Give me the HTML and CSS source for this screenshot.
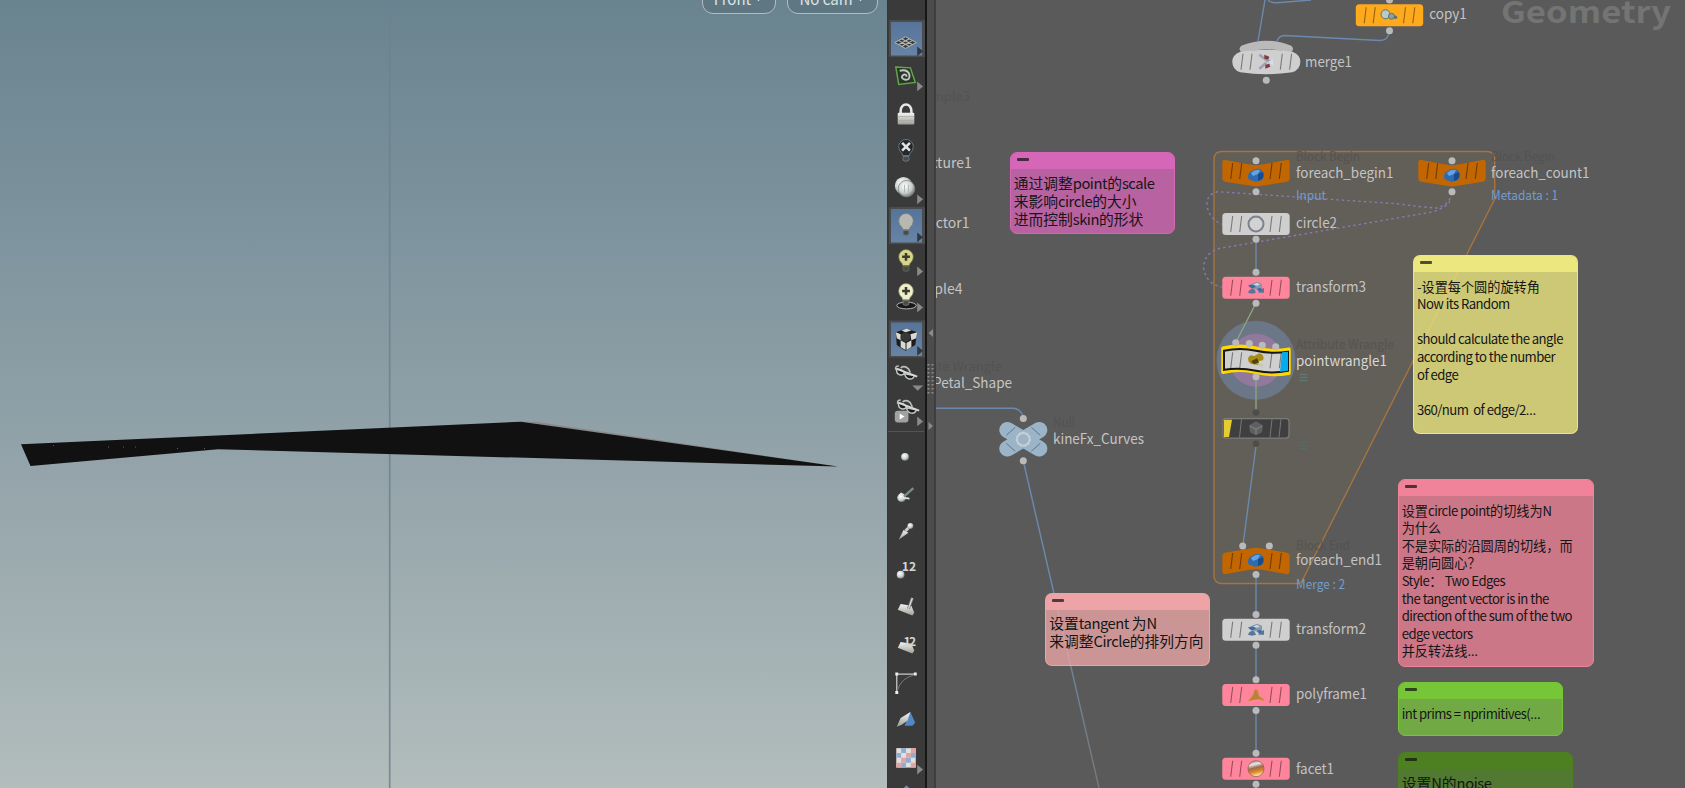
FILE: index.html
```html
<!DOCTYPE html>
<html lang="zh-CN">
<head>
<meta charset="utf-8">
<title>Geometry</title>
<link rel="stylesheet" href="styles.css">
</head>
<body>
<svg class="defs" width="0" height="0" aria-hidden="true">
  <defs>
    <linearGradient id="metal" x1="0" y1="0" x2="0" y2="1"><stop offset="0" stop-color="#f4f4f0"/><stop offset="1" stop-color="#9d9d99"/></linearGradient>
    <radialGradient id="ball" cx=".4" cy=".35" r=".7"><stop offset="0" stop-color="#ffffff"/><stop offset=".6" stop-color="#c9cfce"/><stop offset="1" stop-color="#66706f"/></radialGradient>
    <linearGradient id="copper" x1="0" y1="0" x2="0.25" y2="1"><stop offset="0" stop-color="#7d6f70"/><stop offset=".3" stop-color="#e8e8e8"/><stop offset=".52" stop-color="#a06a50"/><stop offset=".75" stop-color="#dd8520"/><stop offset="1" stop-color="#f5d9a8"/></linearGradient>
    <linearGradient id="fade" gradientUnits="userSpaceOnUse" x1="1023" y1="461" x2="1099" y2="788"><stop offset="0" stop-color="#6b89ae"/><stop offset=".45" stop-color="#6b89ae"/><stop offset="1" stop-color="#777a78"/></linearGradient>
    <g id="stripes"><path d="M-23.3 -8L-25.3 8M-14.3 -8L-16.3 8M16 -8L14 8M25.3 -8L23.3 8"/></g>
    <g id="box"><rect x="-33.7" y="-11" width="67.4" height="22" rx="3.5"/></g>
    <g id="vee"><path d="M-30.5 -11Q-33.7 -12 -33.7 -8V7Q-33.7 10 -31 10.8L-4 15Q0 15.8 4 15L31 10.8Q33.7 10 33.7 7V-8Q33.7 -12 30.5 -11L6 -6.5Q0 -5 -6 -6.5Z"/></g>
    <g id="cap"><path d="M-30 -8.5L-6 -12.6Q0 -14 6 -12.6L30 -8.5Q33.7 -8 33.7 -5V10Q33.7 14 30 13L6 8.8Q0 7.6 -6 8.8L-30 13Q-33.7 14 -33.7 10V-5Q-33.7 -8 -30 -8.5Z"/></g>
    <g id="blob"><path d="M-8 2Q-8 -3 -4 -4Q-1 -7 4 -6Q8 -4 8 1Q8 5 3 6Q-1 7.500 -4 5.500Q-8 5 -8 2Z" fill="#2c6cb5"/><path d="M-5 -2Q-1 -6 4 -5L2 -1L-3 1Z" fill="#69a2e2"/><path d="M2 -1L7 -3Q9 4 2 6Z" fill="#184b88"/></g>
    <g id="xform"><path d="M-4 -4L1 -6L6 -4L6 0L1 2L-4 0Z" fill="#8497ab"/><path d="M-8 -2Q-3 -5 0 -1L-4 1ZM8 3Q6 -1 1 1L3 4Z" fill="#3d6ca3"/><path d="M-8 5Q-7 1 -2 1L0 5L-4 6ZM2 5L8 0L8 5Z" fill="#557799"/><path d="M-3 -3L1 -5L4 -3L1 -2Z" fill="#cbd6de"/></g>
    <g id="more"><path d="M0 -5L6 0L0 5Z"/></g>
    <g id="bulb"><path d="M-3.500 5L-4 3Q-7.500 0 -7.500 -4A7.500 7.500 0 0 1 7.500 -4Q7.500 0 4 3L3.500 5Z"/><path d="M-3 6H3V10Q0 12 -3 10Z" fill="#454b50"/></g>
    <g id="glasses"><path d="M-8 -8Q-12 -8 -11 -4M-6 -6Q-2 -9 2 -5L4 -1" fill="none" stroke="#b9bfbd" stroke-width="1.600"/><path d="M-10 -5Q-11 0 -7 1Q-3 2 -2 -1L-5 -4ZM-2 0Q-1 5 3 5.500Q7 6 8 2Z" fill="#1c1c1c" stroke="#c2c6c4" stroke-width="1.500"/><path d="M-10 -5L11 3" fill="none" stroke="#d5d9d7" stroke-width="2"/></g>
    <g id="plate"><path d="M-6 -3L5 -1L8 6L6 9L-9 3Z" fill="url(#metal)"/></g>
  </defs>
</svg>
<div class="app">
  <main class="viewport">
    <svg class="scene" viewBox="0 0 887 788">
      <path class="axis" d="M389.700 0V788"/>
      <path class="rim" d="M521 421.500L537 422L838 466.500L700 448Z"/>
      <path class="mesh" d="M21 444.300L521 421.700L838 466.500L218 449.300L30.500 466Z"/>
      <path class="sparks" d="M53 445.500h1M108 447h1M123 447h1M135 447h1M177 448.500h1M204 448.500h1"/>
    </svg>
    <div class="pills">
      <div class="pill front"><span>Front</span><svg viewBox="0 0 10 6"><path d="M0 0H10L5 5.500Z"/></svg></div>
      <div class="pill cam"><span>No cam</span><svg viewBox="0 0 10 6"><path d="M0 0H10L5 5.500Z"/></svg></div>
    </div>
  </main>
  <aside class="tools">
    <svg class="tool on" viewBox="-19 -18.670 38 37.330"><g transform="translate(-1 4)"><path d="M-11 0L0 -6L11 0L0 6Z" fill="#383c40" stroke="#b9b9b0" stroke-width="1"/><path d="M-7 -2L4 4M-4 -4L7 2M-7 2L4 -4M-4 4L7 -2" stroke="#b9b9b0" stroke-width="1.100"/></g><use href="#more" class="dark" x="11" y="13"/></svg>
    <svg class="tool" viewBox="-19 -18.670 38 37.330"><g transform="translate(-1 0)"><path d="M-10 -9L5 -8L10 7L-7 9Z" fill="#29352b" stroke="#62a64b" stroke-width="1.500"/><path d="M-6 -5Q2 -7 4 -1Q5 5 -1 4Q-6 2 -2 -1Q1 -2 1 1" fill="none" stroke="#c4c8c0" stroke-width="2"/></g><use href="#more" class="grey" x="11" y="11"/></svg>
    <svg class="tool" viewBox="-19 -18.670 38 37.330"><path d="M-6 0V-3A5.500 6.500 0 0 1 5 -3V0" fill="none" stroke="#e8e8e4" stroke-width="2.600"/><rect x="-9" y="-1" width="17" height="12" rx="1" fill="url(#metal)"/><path d="M-9 3H8M-9 7H8" stroke="#aaaaa4" stroke-width=".8"/></svg>
    <svg class="tool" viewBox="-19 -18.670 38 37.330"><use href="#bulb" x="-.5" fill="#22282b" stroke="#68757b" stroke-width="1"/><path d="M-4.500 -8L3.500 0M3.500 -8L-4.500 0" stroke="#e4e4e4" stroke-width="2.600"/></svg>
    <svg class="tool" viewBox="-19 -18.670 38 37.330"><circle cx="-3" cy="-2" r="9" fill="url(#ball)"/><circle cx="0" cy="1" r="8.500" fill="url(#ball)" stroke="#7a8483" stroke-width=".8"/><path d="M-2 -3V5M2 -3V5" stroke="#aeb4b3"/><use href="#more" class="grey" x="11" y="12"/></svg>
    <svg class="tool on" viewBox="-19 -18.670 38 37.330"><use href="#bulb" x="-.5" y="-1" fill="#b8b8b2" stroke="#777b7e" stroke-width=".8"/><use href="#more" class="dark" x="11" y="12"/></svg>
    <svg class="tool" viewBox="-19 -18.670 38 37.330"><g transform="translate(-.5 -2)"><use href="#bulb" fill="#d8d58a" stroke="#6f6e43" stroke-width=".7"/><path d="M0 -8V0M-4 -4H4" stroke="#3b3b30" stroke-width="2.600"/></g><use href="#more" class="grey" x="11" y="9"/></svg>
    <svg class="tool" viewBox="-19 -18.670 38 37.330"><ellipse cy="6" rx="10" ry="3.500" fill="#181818" stroke="#b8bcb8"/><g transform="translate(-.5 -5)"><use href="#bulb" fill="#efefca" stroke="#8f8f72" stroke-width=".7"/><path d="M0 -8V0M-4 -4H4" stroke="#3b3b30" stroke-width="2.600"/></g><use href="#more" class="grey" x="11" y="8"/></svg>
    <svg class="tool on low" viewBox="-19 -18.670 38 37.330"><g transform="translate(0 0)"><path d="M-11 -7L0 -11L11 -7L9 6L-1 12L-10 6Z" fill="#1c1c1c"/><path d="M-5 -9L0 -11L5 -9L-1 -7ZM4 -5L11 -7L10 -1L5 1ZM-11 -7L-6 -5L-6 1L-10 -1ZM-6 1L-1 4L-1 11L-6 8ZM0 4L5 1L5 8L0 11Z" fill="#d9d9d5"/><circle cx="-1" cy="-2" r="5" fill="#383838"/></g><use href="#more" class="dark" x="11" y="12"/></svg>
    <svg class="tool" viewBox="-19 -18.670 38 37.330"><use href="#glasses" y="-1"/><path class="grey" d="M6 11H17L11.500 16.500Z"/></svg>
    <svg class="tool" viewBox="-19 -18.670 38 37.330"><use href="#glasses" x="2" y="-4"/><rect x="-12" y="-1" width="14" height="12" rx="3" fill="#a0a2a0"/><path d="M-7 2L-2 5L-7 8Z" fill="#fff"/><use href="#more" class="grey" x="11" y="10"/></svg>
    <hr class="rule">
    <svg class="tool" viewBox="-19 -18.670 38 37.330"><circle cx="-1.500" cy="0" r="4" fill="url(#ball)"/></svg>
    <svg class="tool" viewBox="-19 -18.670 38 37.330"><circle cx="-5" cy="4" r="4.500" fill="url(#ball)"/><path d="M-3 3L7 -6" stroke="#7d8b8b" stroke-width="2.400"/><path d="M-6 -1L-3 4L3 5" fill="none" stroke="#e8e8e8" stroke-width="1.800"/></svg>
    <svg class="tool" viewBox="-19 -18.670 38 37.330"><path d="M-8 8L-3 -2L2 1Z" fill="url(#metal)"/><path d="M-1 -1L4 -6" stroke="#ccc" stroke-width="3"/><circle cx="4" cy="-6" r="3" fill="url(#ball)"/></svg>
    <svg class="tool" viewBox="-19 -18.670 38 37.330"><circle cx="-6" cy="5" r="4" fill="url(#ball)"/><text class="num" x="-5" y="1" textLength="15">12</text></svg>
    <svg class="tool" viewBox="-19 -18.670 38 37.330"><use href="#plate"/><path d="M2 2L6 -9" stroke="#777f7c" stroke-width="3"/><path d="M2 2L6 -9" stroke="#ddd" stroke-width="1.300"/></svg>
    <svg class="tool" viewBox="-19 -18.670 38 37.330"><use href="#plate"/><text class="num" x="-3" y="1" textLength="13">12</text></svg>
    <svg class="tool" viewBox="-19 -18.670 38 37.330"><path d="M-10 10V-9H9" fill="none" stroke="#c9c9c4" stroke-width="1.300"/><path d="M-9 7Q-6 -4 7 -8" fill="none" stroke="#777d7c"/><path d="M-10 8.500v3M-11.500 -9h3M7.500 -9h3" stroke="#eee" stroke-width="3"/></svg>
    <svg class="tool" viewBox="-19 -18.670 38 37.330"><path d="M-2 6L4 -8L9 3L6 6Z" fill="#5088c4"/><path d="M-10 7L-6 -2L4 -8L1 1L-5 5Z" fill="url(#metal)"/></svg>
    <svg class="tool" viewBox="-19 -18.670 38 37.330"><rect x="-10.500" y="-10" width="20" height="20" fill="#e2e0dc"/><path d="M-5.500 -10h5v5h-5zM-10.500 -5h5v5h-5zM-.5 0h5v5h-5zM-5.500 5h5v5h-5zM4.500 -5h5v5h-5z" fill="#91acd4"/><path d="M4.500 -10h5v5h-5zM-.5 -5h5v5h-5zM-5.500 0h5v5h-5zM-10.500 5h5v5h-5zM4.500 5h5v5h-5z" fill="#dfa5a5"/><use href="#more" class="grey" x="11" y="12"/></svg>
    <svg class="tool" viewBox="-19 -18.670 38 37.330"><path d="M0 -11L7 -4L0 2L-7 -4Z" fill="#5b8cc8"/></svg>
  </aside>
  <div class="splitter">
    <svg viewBox="0 0 7 788"><path class="tick" d="M6 329V337L1.500 333ZM1.500 422V430L6 426Z"/><path class="grip" d="M1.500 364V394M5.500 364V394"/></svg>
  </div>
  <section class="network">
    <svg class="graph" viewBox="936 0 749 788">
      <text class="context" x="1501" y="22.500" textLength="170" lengthAdjust="spacingAndGlyphs">Geometry</text>
      <path class="block" d="M1222 151.500H1486.700Q1494.700 151.500 1494.700 159.500V199L1302 581Q1301 583.500 1298 583.500H1222Q1214 583.500 1214 575.500V159.500Q1214 151.500 1222 151.500Z"/>
      <g class="wire">
        <path d="M1265 0L1258 41M1268 0Q1271 3 1277 2.700L1311 0"/>
        <path d="M1389.500 31Q1388 40.700 1380 40.500L1284 35.500Q1279 36 1277 41"/>
        <path d="M936 408.300H1013Q1020 408.500 1023 416"/>
        <path d="M1256 239V272M1256 446L1243 545M1256 575V614M1256 645V679M1256 710V753"/>
        <path class="fading" d="M1023.300 461L1099 788"/>
      </g>
      <path class="link" d="M1452 193Q1449 206 1436 208Q1420 207 1400 204L1218 191.700Q1206 194 1207 206Q1210 220 1222 224M1450 201Q1446 208 1432 212L1219 248.500Q1204 253 1203.500 268Q1206 284 1222 287"/>

      <g class="hint">
        <text x="1296" y="160.500" textLength="64" lengthAdjust="spacingAndGlyphs">Block Begin</text>
        <text x="1491" y="160.500" textLength="64" lengthAdjust="spacingAndGlyphs">Block Begin</text>
        <text x="1296" y="348.500" textLength="98" lengthAdjust="spacingAndGlyphs">Attribute Wrangle</text>
        <text x="1296" y="549.500" textLength="54" lengthAdjust="spacingAndGlyphs">Block End</text>
        <text x="1053" y="427" textLength="22" lengthAdjust="spacingAndGlyphs">Null</text>
        <text x="970" y="101" text-anchor="end">ample3</text>
        <text x="1002" y="371" text-anchor="end">Attribute Wrangle</text>
      </g>
      <g class="label">
        <text x="1429.300" y="19" textLength="37.500" lengthAdjust="spacingAndGlyphs">copy1</text>
        <text x="1305" y="67" textLength="47" lengthAdjust="spacingAndGlyphs">merge1</text>
        <text x="1296" y="178" textLength="97.500" lengthAdjust="spacingAndGlyphs">foreach_begin1</text>
        <text x="1491" y="178" textLength="98.500" lengthAdjust="spacingAndGlyphs">foreach_count1</text>
        <text x="1296" y="227.500" textLength="41" lengthAdjust="spacingAndGlyphs">circle2</text>
        <text x="1296" y="292" textLength="70" lengthAdjust="spacingAndGlyphs">transform3</text>
        <text class="lit" x="1296" y="365.500" textLength="91" lengthAdjust="spacingAndGlyphs">pointwrangle1</text>
        <text x="1296" y="565" textLength="86" lengthAdjust="spacingAndGlyphs">foreach_end1</text>
        <text x="1296" y="634" textLength="70" lengthAdjust="spacingAndGlyphs">transform2</text>
        <text x="1296" y="698.700" textLength="71" lengthAdjust="spacingAndGlyphs">polyframe1</text>
        <text x="1296" y="773.500" textLength="38" lengthAdjust="spacingAndGlyphs">facet1</text>
        <text x="1053" y="443.500" textLength="91" lengthAdjust="spacingAndGlyphs">kineFx_Curves</text>
        <text x="971.700" y="167.800" text-anchor="end">texture1</text>
        <text x="969.500" y="227.700" text-anchor="end">vector1</text>
        <text x="962.500" y="293.500" text-anchor="end">sample4</text>
        <text x="933" y="388" textLength="79" lengthAdjust="spacingAndGlyphs">Petal_Shape</text>
      </g>
      <g class="info">
        <text x="1296" y="200" textLength="30" lengthAdjust="spacingAndGlyphs">Input</text>
        <text x="1491" y="200" textLength="67" lengthAdjust="spacingAndGlyphs">Metadata : 1</text>
        <text x="1296" y="588.700" textLength="49" lengthAdjust="spacingAndGlyphs">Merge : 2</text>
      </g>

      <g transform="translate(1389.500 15.300)"><use href="#box" class="amber"/><use href="#stripes" class="stripes"/><circle cx="-4" cy="-1" r="4.500" fill="#b9cac9" stroke="#567277"/><circle cx="2" cy="1" r="3" fill="#87a2a5" stroke="#567277"/><circle cx="6" cy="2" r="1.700" fill="#567277"/></g>
      <g transform="translate(1266.300 61.700)"><path class="port" d="M-24 -9Q-29 -12 -25 -16Q-12 -21 0 -21Q12 -21 25 -16Q29 -12 24 -9Q12 -12.500 0 -12.500Q-12 -12.500 -24 -9Z"/><path class="silver" d="M-26 -10Q0 -14 26 -10Q34 -7 34 0Q34 8 26 10.500Q0 14.500 -26 10.500Q-34 8 -34 0Q-34 -7 -26 -10Z"/><use href="#stripes" class="stripes"/><path d="M-7 -7L1 -1L7 0M-7 7L0 1" fill="none" stroke="#9aa3af" stroke-width="2.500"/><path d="M-2 -7L3 -5L2 -2L-2 -3ZM-1 3L3 2L4 5L-1 7Z" fill="#85383e"/><path d="M2 0L7 -3V4Z" fill="#d5dfe9"/></g>
      <g transform="translate(1256 171)"><use href="#vee" class="orange"/><use href="#stripes" class="stripes"/><use href="#blob" y="4"/></g>
      <g transform="translate(1452 171)"><use href="#vee" class="orange"/><use href="#stripes" class="stripes"/><use href="#blob" y="4"/></g>
      <g transform="translate(1256 224)"><use href="#box" class="silver"/><use href="#stripes" class="stripes"/><circle r="7.500" fill="#d2d2d2" stroke="#7c828d" stroke-width="2"/></g>
      <g transform="translate(1256 287.700)"><use href="#box" class="rose"/><use href="#stripes" class="stripes"/><use href="#xform"/></g>
      <g transform="translate(1256 360.300)"><circle class="halo" r="39.500"/><circle class="core" r="26.500"/><path class="select" d="M-33 -12Q-16 -16 0 -12T33 -11V13Q16 16 0 12T-33 12Z"/><path class="silver body" d="M-32 -9.500Q-16 -13 0 -9.500T32 -8.500V10.500Q16 14 0 10.500T-32 9.500Z"/><path d="M26 -8L32 -8.500V10.500L24 11.500Z" fill="#00aef0"/><use href="#stripes" class="stripes"/><path d="M-8 -2Q-6 -7 -2 -4L3 -7Q9 -6 7 0L2 1L4 5L-2 4Q-8 4 -8 -2Z" fill="#a98b18"/><path d="M-5 1L1 -2L3 2L-2 4Z" fill="#4f430e"/><path d="M1 3L8 4L6 8Z" fill="#c7cabb"/></g>
      <path class="green" d="M1256 303L1236 342M1256 377V412"/>
      <g transform="translate(1256 428.300)"><rect class="muted" x="-33" y="-9.700" width="66" height="19.500" rx="3"/><path d="M-32 -8.500H-24L-27 8.700H-32Z" fill="#e5cc30"/><path class="pale" d="M-14.500 -9L-16.500 9M16 -9L14 9M25 -9L23 9"/><path d="M-7 -3L0 -7L7 -3L6 4L0 7L-6 4Z" fill="#5d5f60"/><path d="M-6 -2L0 1L6 -2M0 1V6" stroke="#84878a" fill="none"/></g>
      <g transform="translate(1256 561)"><use href="#cap" class="orange"/><use href="#stripes" class="stripes"/><use href="#blob" y="-1"/></g>
      <g transform="translate(1256 629.700)"><use href="#box" class="silver"/><use href="#stripes" class="stripes"/><use href="#xform"/></g>
      <g transform="translate(1256 695)"><use href="#box" class="rose"/><use href="#stripes" class="stripes"/><path d="M-8 6L-3 0L-1 -6L2 -5L3 1L8 4L7 6L0 3L-5 6Z" fill="#c68b36"/><path d="M-1 -5L3 2L5 4L-5 5L-3 1Z" fill="#b98237"/></g>
      <g transform="translate(1256 768.700)"><use href="#box" class="rose"/><use href="#stripes" class="stripes"/><circle r="8" fill="url(#copper)" stroke="#8c5b43" stroke-width=".7"/></g>
      <g transform="translate(1023.300 439.300)"><path class="ex" d="M-16 -9.300L16 9.300M16 -9.300L-16 9.300"/><path d="M-17 -4L-8 -12M-17 4L-8 12M17 -4L8 -12M17 4L8 12" stroke="#5f7688"/><circle r="6.300" fill="none" stroke="#c7d0d5" stroke-width="1.800"/><circle r="6.800" fill="none" stroke="#c7d0d5" stroke-width="1.800" stroke-dasharray="1.700 2.200"/></g>

      <g class="port">
        <circle cx="1389.500" cy="0" r="3.500"/><circle cx="1389.500" cy="30.700" r="3.500"/><circle cx="1266.300" cy="80.200" r="3.500"/>
        <circle cx="1256" cy="160.800" r="3.500"/><circle cx="1256" cy="191.700" r="3.500"/><circle cx="1452" cy="160.800" r="3.500"/><circle cx="1452" cy="191.700" r="3.500"/>
        <circle cx="1256" cy="239.300" r="3.500"/><circle cx="1256" cy="272.300" r="3.500"/><circle cx="1256" cy="303.200" r="3.500"/>
        <circle cx="1235.700" cy="342.700" r="3.500"/><circle cx="1249.300" cy="343.500" r="3.500"/><circle cx="1262.300" cy="345.300" r="3.500"/><circle cx="1275.700" cy="346.700" r="3.500"/><circle cx="1256" cy="376.700" r="3.500"/>
        <circle cx="1242.700" cy="546" r="3.500"/><circle cx="1269.300" cy="546" r="3.500"/><circle cx="1256" cy="574.500" r="3.500"/>
        <circle cx="1256" cy="614.400" r="3.500"/><circle cx="1256" cy="645.200" r="3.500"/><circle cx="1256" cy="679.700" r="3.500"/><circle cx="1256" cy="710.500" r="3.500"/><circle cx="1256" cy="753.300" r="3.500"/><circle cx="1256" cy="784.300" r="3.500"/>
        <circle cx="1023.300" cy="418.400" r="3.500"/><circle cx="1023.300" cy="460.800" r="3.500"/>
      </g>
      <g fill="#4e4d4b"><circle cx="1256" cy="412.500" r="3.300"/><circle cx="1256" cy="443.700" r="3.300"/></g>
      <path d="M1299.500 374.500h8M1299.500 377.500h8M1299.500 380.500h8" stroke="#5e7a75" stroke-width="1.500"/>
      <path d="M1299.500 442.500h8M1299.500 445.500h8M1299.500 448.500h8" stroke="#5b6965" stroke-width="1.500"/>
    </svg>

    <article class="note big scale"><header></header><p>通过调整<span>point</span>的<span>scale</span><br>来影响<span>circle</span>的大小<br>进而控制<span>skin</span>的形状</p></article>
    <article class="note angle"><header></header><p>-设置每个圆的旋转角<br><span>Now its Random</span><br><br><span>should calculate the angle</span><br><span>according to the number</span><br><span>of edge</span><br><br><span>360/num&nbsp; of edge/2</span><i>…</i></p></article>
    <article class="note big tangent"><header></header><p>设置<span>tangent </span>为N<br>来调整<span>Circle</span>的排列方向</p></article>
    <article class="note normal"><header></header><p>设置<span>circle point</span>的切线为N<br>为什么<br>不是实际的沿圆周的切线<b>，</b>而<br>是朝向圆心<b>？</b><br><span>Style</span><b>：</b><span> Two Edges</span><br><span>the tangent vector is in the</span><br><span>direction of the sum of the two</span><br><span>edge vectors</span><br>并反转法线<i>…</i></p></article>
    <article class="note prims"><header></header><p><span>int prims = nprimitives(</span><i>…</i></p></article>
    <article class="note big noise"><header></header><p>设置N的<span>noise</span></p></article>
  </section>
</div>
</body>
</html>
```
FILE: styles.css
```css
* { box-sizing: border-box; }

body {
  margin: 0;
  overflow: hidden;
  background: #5a5a5a;
  font-family: "Noto Sans CJK SC", "Noto Sans", sans-serif;
}

.defs { position: absolute; }

.app {
  display: grid;
  grid-template-columns: 886.5px 40px 9.5px 1fr;
  width: 1685px;
  height: 788px;
}

/* 3D viewport */
.viewport {
  position: relative;
  overflow: hidden;
  background: linear-gradient(#69838f 0%, #7e949e 30%, #94a4aa 60%, #b2bdbc 100%);
}
.scene { display: block; width: 887px; height: 788px; }
.axis { stroke: #6c828e; stroke-opacity: .85; stroke-width: 1.7; }
.mesh { fill: #101110; }
.rim { fill: #8b8888; }
.sparks { stroke: #59615f; }

.pills {
  position: absolute;
  top: -13px;
  right: 9px;
  display: flex;
  gap: 11px;
}
.pill {
  display: flex;
  align-items: center;
  justify-content: center;
  gap: 3px;
  height: 27px;
  padding-bottom: 4px;
  border: 1.5px solid #b0bdc3;
  border-radius: 11px;
  background: #5f7782;
  color: #dde4e7;
  font-size: 15px;
  line-height: 20px;
}
.pill svg { width: 9px; height: 6px; fill: #dde4e7; }
.pill.front { width: 74px; }
.pill.cam { width: 91px; }

/* Display toolbar */
.tools {
  display: flex;
  flex-direction: column;
  height: 788px;
  overflow: hidden;
  padding-top: 20px;
  border-left: 1px solid #31383b;
  border-right: 2px solid #171717;
  background: #3a3a3a;
}
.tool {
  flex: none;
  width: 37px;
  height: 37.33px;
}
.rule ~ .tool { height: 37.7px; }
.tool.on {
  background: linear-gradient(#56749a, #6784a5) 3.5px 2px / 31px 33.5px no-repeat, linear-gradient(#4b4c4e, #4b4c4e) 1px 0 / 36px 37px no-repeat;
}
.tool.low { transform: translateY(1.5px); }
.dark { fill: #2e3944; }
.grey { fill: #8a8a8a; }
.num {
  fill: #d4d4d4;
  font: bold 12.5px "Noto Sans CJK SC", sans-serif;
}
.rule {
  flex: none;
  width: 36px;
  height: 1px;
  margin: 0 0 6px 0;
  border: 0;
  background: #545454;
}

.splitter {
  border-right: 2px solid #3e3e3e;
  background: #4c4c4c;
}
.splitter svg { display: block; width: 7px; height: 788px; }
.tick { fill: #8b8b8b; }
.grip { stroke: #8b8b8b; stroke-width: 2; stroke-dasharray: 1.5 2.5; }

/* Node network */
.network {
  position: relative;
  overflow: hidden;
  background: #5a5a5a;
}
.graph { display: block; width: 749px; height: 788px; }
.context { fill: #747474; font-size: 30px; font-weight: 700; }
.block { fill: #625e58; stroke: #a5743f; stroke-width: 1.4; }
.wire path { fill: none; stroke: #6b89ae; stroke-width: 1.4; }
.wire .fading { stroke: url(#fade); }
.green { fill: none; stroke: #8fa37d; stroke-width: 1.4; }
.link { fill: none; stroke: #877ab0; stroke-width: 1.4; stroke-dasharray: 2.5 3; }

.label { fill: #c4c4c4; font-size: 14px; }
.lit { fill: #d8d8d8; }
.hint { fill: #515151; font-size: 13px; opacity: .75; }
.info { fill: #719dd0; font-size: 13px; }

.amber { fill: #ffa91c; }
.orange { fill: #c16600; }
.silver { fill: #cfcfcf; }
.rose { fill: #ff859d; }
.stripes { stroke: #000; stroke-opacity: .42; stroke-width: 1.1; fill: none; }
.port { fill: #bababa; }
.halo { fill: #6b7687; }
.core { fill: #90799c; }
.select { fill: #ffd800; stroke: #ffd800; stroke-width: 3.5; stroke-linejoin: round; }
.body { stroke: #151515; stroke-width: 2; }
.muted { fill: #3f3f3f; stroke: #7b7b7b; stroke-width: 1.3; }
.pale { stroke: #777; fill: none; }
.ex { stroke: #9cb4c8; stroke-width: 16; stroke-linecap: round; }

/* Sticky notes on the canvas */
.note {
  position: absolute;
  overflow: hidden;
  border: 1px solid var(--head);
  border-radius: 7px;
  background: var(--body);
  color: #151515;
  font-size: 13.15px;
  line-height: 17.6px;
}
.note header {
  height: 16px;
  padding: 5px 0 0 6px;
  background: var(--head);
}
.note header::before {
  content: "";
  display: block;
  width: 12px;
  height: 3px;
  border-radius: 1px;
  background: #151515bb;
}
.note p { margin: 0; padding: 6px 0 0 3px; white-space: nowrap; }
.note span { letter-spacing: -.55px; }
.note b { font-family: "Noto Sans CJK TC", sans-serif; font-weight: 400; }
.note i { font-family: "Noto Sans", sans-serif; font-style: normal; line-height: 1; }
.note.big { font-size: 14.75px; line-height: 18px; }
.note.big p { padding-top: 4.5px; }
.note.big span { letter-spacing: -.45px; }

.scale { left: 73.7px; top: 152.3px; width: 165px; height: 82px; --head: #d566b8; --body: #b862a1; }
.angle { left: 477px; top: 254.7px; width: 165px; height: 179.7px; --head: #efe880ee; --body: rgba(234, 228, 125, .8); }
.tangent { left: 109.3px; top: 592.7px; width: 165px; height: 73px; --head: #f0a5a7ee; --body: rgba(231, 164, 164, .8); }
.normal { left: 461.7px; top: 478.7px; width: 196px; height: 188px; --head: #f08399; --body: #cc7787; }
.prims { left: 461.7px; top: 681.6px; width: 165px; height: 54.4px; --head: #76c637; --body: #71aa45; }
.noise { left: 461.7px; top: 752.3px; width: 175px; height: 60px; --head: #4c8020; --body: #517932; }
```
